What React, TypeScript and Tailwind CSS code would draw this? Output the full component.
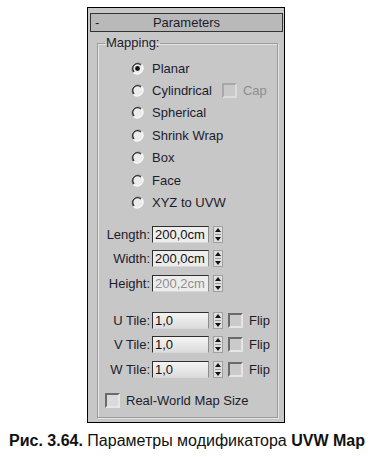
const ui = "font-['Liberation_Sans',Arial,sans-serif] text-[13px] leading-[15px] text-[#1c1c2e]";

function Radio({ checked }: { checked?: boolean }) {
  return (
    <svg width="13" height="13" viewBox="0 0 13 13" className="shrink-0">
      <circle cx="6.5" cy="6.5" r="6" fill="#ececec" />
      <path d="M10.7 2.3 A6 6 0 0 0 2.3 10.7" fill="none" stroke="#8a8a8a" strokeWidth="1" />
      <path d="M9.9 3.1 A4.8 4.8 0 0 0 3.1 9.9" fill="none" stroke="#2a2a2a" strokeWidth="1.3" />
      <path d="M2.3 10.7 A6 6 0 0 0 10.7 2.3" fill="none" stroke="#ffffff" strokeWidth="1" />
      {checked && <circle cx="6.5" cy="6.5" r="2.4" fill="#111111" />}
    </svg>
  );
}

function Check({ disabled, light }: { disabled?: boolean; light?: boolean }) {
  return (
    <span
      className={
        "block h-[15px] w-[15px] shrink-0 border-[2px] " +
        (disabled
          ? "border-t-[#a8a8a8] border-l-[#a8a8a8] border-r-[#dcdcdc] border-b-[#dcdcdc] bg-[#c9c9c9]"
          : light
            ? "border-t-[#6a6a6a] border-l-[#6a6a6a] border-r-[#e6e6e6] border-b-[#e6e6e6] bg-[#dadada]"
            : "border-t-[#6a6a6a] border-l-[#6a6a6a] border-r-[#e6e6e6] border-b-[#e6e6e6] bg-[#cacaca]")
      }
    />
  );
}

function Spinner() {
  return (
    <div className="flex h-[17px] w-[10px] shrink-0 flex-col items-center justify-center gap-[2px] border border-[#a0a0a0] bg-[#dedede]">
      <svg width="6" height="4" viewBox="0 0 6 4">
        <path d="M3 0 L6 4 L0 4 Z" fill="#111" />
      </svg>
      <span className="block h-px w-[6px] bg-[#9a9a9a]" />
      <svg width="6" height="4" viewBox="0 0 6 4">
        <path d="M0 0 L6 0 L3 4 Z" fill="#111" />
      </svg>
    </div>
  );
}

function Field({ label, value, disabled, flip }: { label: string; value: string; disabled?: boolean; flip?: boolean }) {
  return (
    <div className="flex h-[17px] items-center">
      <span className="w-[52px] shrink-0 text-right">{label}</span>
      <div
        className={
          "ml-[2px] flex h-[17px] w-[57px] shrink-0 items-center border border-t-[#2e2e2e] border-l-[#2e2e2e] border-r-[#8c8c8c] border-b-[#d8d8d8] pl-[2px] " +
          (flip ? "bg-gradient-to-b from-[#f4f4f4] to-[#dcdcdc]" : "bg-[#ededed]") +
          (disabled ? " text-[#8e8e8e]" : " text-[#111]")
        }
      >
        {value}
      </div>
      <div className="ml-[4px]">
        <Spinner />
      </div>
      {flip && (
        <div className="ml-[5px] flex items-center">
          <Check />
          <span className="ml-[6px]">Flip</span>
        </div>
      )}
    </div>
  );
}

const mappings = ["Planar", "Cylindrical", "Spherical", "Shrink Wrap", "Box", "Face", "XYZ to UVW"];

export default function App() {
  return (
    <div className="h-[457px] w-[374px] overflow-hidden bg-white">
      <div className="ml-[87px] mt-[7px] h-[416px] w-[198px] border border-black bg-[#c7c7c7] pl-[2px] pr-[1px] pt-[5px]">
        <div className={ui + " grid h-[19px] grid-cols-[20px_1fr_20px] items-center border border-[#333] bg-[#b9b9b9]"}>
          <span className="pl-[4px]">-</span>
          <span className="text-center">Parameters</span>
          <span />
        </div>
        <fieldset className={ui + " ml-[7px] mr-[5px] mt-[4px] h-[382px] border border-[#9c9c9c] shadow-[inset_1px_1px_0_#e4e4e4,1px_1px_0_#e4e4e4]"}>
          <legend className="ml-[7px] px-[1px] leading-[14px]">Mapping:</legend>
          <div className="pl-[33px] pt-[7px]">
            {mappings.map((m, i) => (
              <div key={m} className="flex h-[22.4px] items-center">
                <Radio checked={i === 0} />
                <span className="ml-[8px]">{m}</span>
                {m === "Cylindrical" && (
                  <div className="ml-[10px] flex items-center">
                    <Check disabled />
                    <span className="ml-[6px] text-[#8e8e8e]">Cap</span>
                  </div>
                )}
              </div>
            ))}
          </div>
          <div className="mt-[12px] flex flex-col gap-[7.5px]">
            <Field label="Length:" value="200,0cm" />
            <Field label="Width:" value="200,0cm" />
            <Field label="Height:" value="200,2cm" disabled />
          </div>
          <div className="mt-[20px] flex flex-col gap-[7.5px]">
            <Field label="U Tile:" value="1,0" flip />
            <Field label="V Tile:" value="1,0" flip />
            <Field label="W Tile:" value="1,0" flip />
          </div>
          <div className="ml-[7px] mt-[15px] flex items-center">
            <Check light />
            <span className="ml-[6px]">Real-World Map Size</span>
          </div>
        </fieldset>
      </div>
      <p className="mt-[9px] text-center font-['Liberation_Sans',Arial,sans-serif] text-[16px] leading-[18px] text-[#111]">
        <b>Рис. 3.64.</b> Параметры модификатора <b>UVW Map</b>
      </p>
    </div>
  );
}
